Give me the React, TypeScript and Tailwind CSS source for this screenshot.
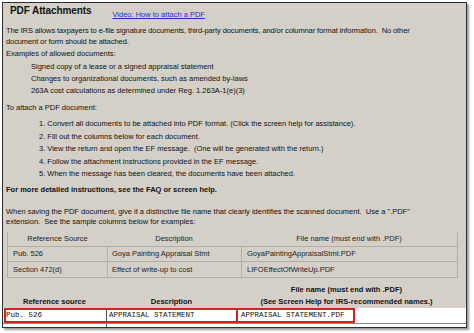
import React from "react";

const examples = [
  "Signed copy of a lease or a signed appraisal statement",
  "Changes to organizational documents, such as amended by-laws",
  "263A cost calculations as determined under Reg. 1.263A-1(e)(3)",
];

const steps = [
  "1. Convert all documents to be attached into PDF format. (Click the screen help for assistance).",
  "2. Fill out the columns below for each document.",
  "3. View the return and open the EF message.  (One will be generated with the return.)",
  "4. Follow the attachment instructions provided in the EF message.",
  "5. When the message has been cleared, the documents have been attached.",
];

const samples = [
  { ref: "Pub. 526", desc: "Goya Painting Appraisal Stmt", file: "GoyaPaintingAppraisalStmt.PDF" },
  { ref: "Section 472(d)", desc: "Effect of write-up to cost", file: "LIFOEffectOfWriteUp.PDF" },
];

export default function App() {
  return (
    <div className="min-h-screen bg-white font-['Liberation_Sans',Arial,sans-serif] text-[#111]">
      <div className="ml-[2px] mt-[2px] w-[465px] h-[326px] overflow-hidden border border-[#2e2e2e] bg-[#d4d0c8] shadow-[2px_2px_2px_rgba(0,0,0,0.4)]">
        {/* Header */}
        <div className="flex h-[16px] items-start pl-[7px]">
          <h1 className="text-[10px] font-bold leading-[16px] tracking-[-0.1px]">PDF Attachments</h1>
          <a className="ml-[21px] mt-[6.5px] text-[7.5px] leading-[9px] text-[#2b2bc4] underline">
            Video: How to attach a PDF
          </a>
        </div>

        <div className="pl-[3px] text-[7.5px]">
          <p className="mt-[6px] leading-[11px] tracking-[-0.1px]">
            The IRS allows taxpayers to e-file signature documents, third-party documents, and/or columnar format information.&nbsp; No other
            <br />
            document or form should be attached.
          </p>

          <p className="mt-[1px] leading-[12px]">Examples of allowed documents:</p>
          <div className="mt-[1px] pl-[25px]">
            {examples.map((e) => (
              <div key={e} className="leading-[12px]">
                {e}
              </div>
            ))}
          </div>

          <p className="mt-[5px] leading-[12px]">To attach a PDF document:</p>
          <div className="mt-[4px] pl-[33px]">
            {steps.map((s) => (
              <div key={s} className="whitespace-pre leading-[12.5px]">
                {s}
              </div>
            ))}
          </div>

          <p className="mt-[3.5px] font-bold leading-[12px]">
            For more detailed instructions, see the FAQ or screen help.
          </p>

          <p className="mt-[11px] leading-[10px]">
            When saving the PDF document, give it a distinctive file name that clearly identifies the scanned document.&nbsp; Use a ".PDF"
            <br />
            extension.&nbsp; See the sample columns below for examples:
          </p>
        </div>

        {/* Sample table */}
        <div className="ml-[4px] mt-[5px] w-[451px] border-x border-b border-[#b3afa6]">
          <div className="grid h-[15px] grid-cols-[99px_134px_1fr] items-center border-b border-[#b3afa6] text-[7.5px] text-[#222]">
            <div className="text-center">Reference Source</div>
            <div className="text-center">Description</div>
            <div className="text-center">File name (must end with .PDF)</div>
          </div>
          {samples.map((r, i) => (
            <div
              key={r.ref}
              className={`grid h-[15px] grid-cols-[99px_134px_1fr] items-center text-[7.5px] text-[#222] ${
                i === 0 ? "border-b border-[#b3afa6]" : ""
              }`}
            >
              <div className="pl-[5px]">{r.ref}</div>
              <div className="flex h-full items-center border-l border-[#b3afa6] pl-[4px]">{r.desc}</div>
              <div className="flex h-full items-center border-l border-[#b3afa6] pl-[5px]">{r.file}</div>
            </div>
          ))}
        </div>

        {/* Input columns */}
        <div className="mt-[6px] grid grid-cols-[103px_131px_1fr] text-[7.5px] font-bold leading-[12px]">
          <div className="flex items-end justify-center">Reference source</div>
          <div className="flex items-end justify-center">Description</div>
          <div className="pr-[10px] text-center">
            File name (must end with .PDF)
            <br />
            (See Screen Help for IRS-recommended names.)
          </div>
        </div>

        <div className="relative bg-white font-['Liberation_Mono','Courier_New',monospace] text-[7.5px] text-[#111]">
          <div className="grid h-[15px] grid-cols-[103px_131px_1fr] items-center">
            <div className="pl-[3px]">Pub. 526</div>
            <div className="flex h-full items-center border-l border-[#555] pl-[2px]">APPRAISAL STATEMENT</div>
            <div className="flex h-full items-center pl-[4px]">APPRAISAL STATEMENT.PDF</div>
          </div>
          <div className="grid h-[15px] grid-cols-[103px_131px_1fr] border-t border-[#888]">
            <div />
            <div className="border-l border-[#555]" />
            <div />
          </div>
          {/* red highlight */}
          <div className="pointer-events-none absolute left-[1px] top-0 flex h-[15px] w-[351px] border-2 border-[#d42020]">
            <div className="w-[232px] border-r-2 border-[#d42020]" />
          </div>
        </div>
      </div>
    </div>
  );
}
